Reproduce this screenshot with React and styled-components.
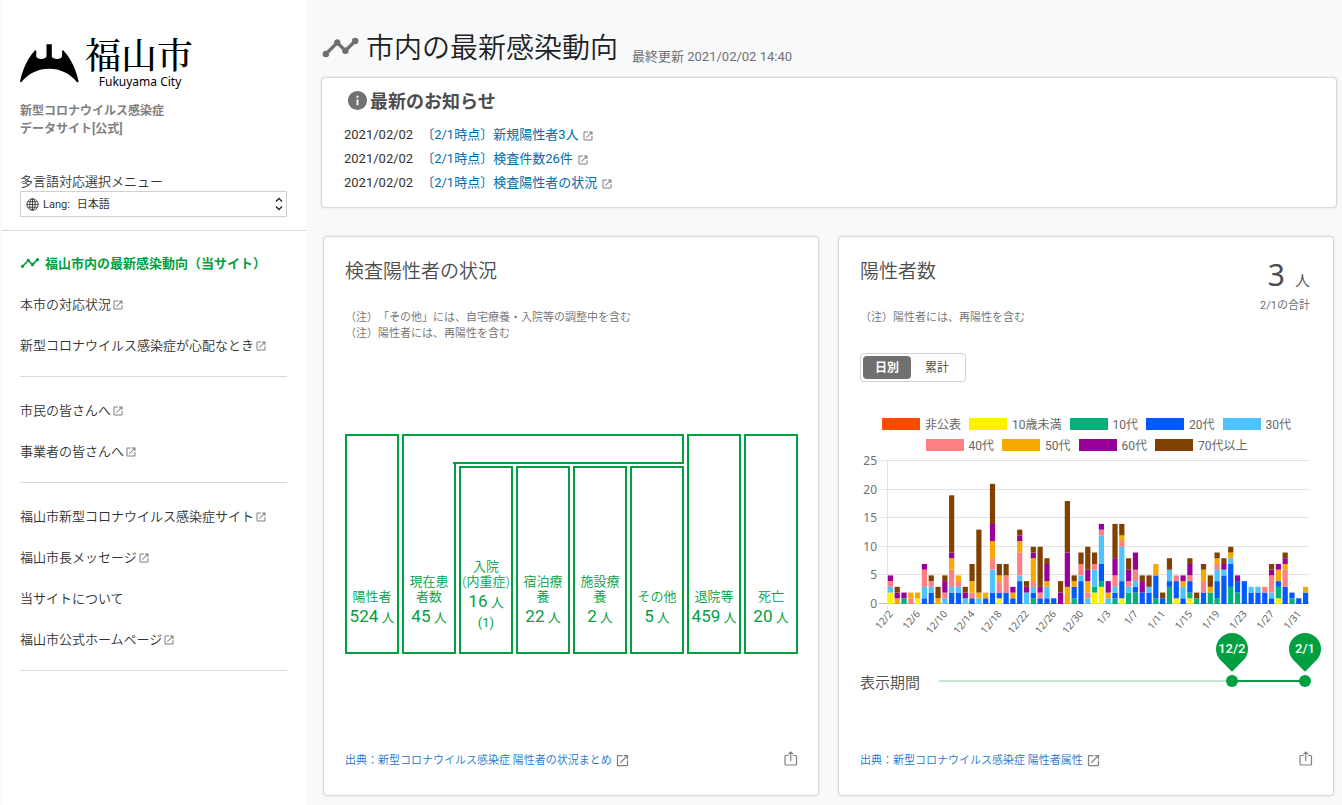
import { useState } from 'react';
import styled, { createGlobalStyle } from 'styled-components';

const GREEN = '#00a040';

const GlobalStyle = createGlobalStyle`
  * { box-sizing:border-box; }
  body {
    margin:0;
    background-color:#f7f9fb;
    color:#333;
    font-family:Roboto, "Noto Sans CJK JP", sans-serif;
    font-size:13px;
    font-weight:350;
    text-spacing-trim:space-all;
  }
  h1, h2, h3, p, ul { margin:0; padding:0; }
  ul { list-style:none; }
  a { color:inherit; text-decoration:none; }
  button, select { font:inherit; color:inherit; }
  svg { display:block; flex:none; }
`;

const Page = styled.div`
  display:flex;
  min-height:100vh;
  padding-left:2px;
`;

// サイドバー
const SideBar = styled.aside`
  flex:none;
  width:304px;
  background-color:#fff;
`;
const SideHeader = styled.header`
  padding:36px 19px 13px 18px;
  border-bottom:1px solid #d9d9d9;
`;
const Logo = styled.a`
  display:flex;
  gap:6px;
  color:#000;
`;
const Emblem = styled.svg`
  margin-top:8px;
`;
const LogoText = styled.span`
  display:flex;
  flex-direction:column;
`;
const LogoName = styled.span`
  font-family:"Noto Serif CJK JP", "Noto Sans CJK JP", serif;
  font-size:36px;
  font-weight:500;
  line-height:36px;
`;
const LogoSub = styled.span`
  padding-left:2px;
  font-family:"Noto Sans", sans-serif;
  font-size:12px;
  font-weight:400;
  line-height:20px;
  text-align:center;
`;
const SiteName = styled.h1`
  margin-top:10px;
  color:#808080;
  font-size:12px;
  font-weight:700;
  line-height:18px;
`;
const LangLabel = styled.label`
  display:block;
  margin-top:34px;
  line-height:19px;
`;
const LangBox = styled.div`
  display:flex;
  align-items:center;
  gap:4px;
  height:26px;
  padding:0 3px 0 5px;
  border:1px solid #d0d0d0;
  font-size:11px;
  font-weight:400;
`;
const LangSelect = styled.select`
  flex:1;
  padding:0 0 0 3px;
  border:0;
  background:none;
  appearance:none;
`;
const NavGroup = styled.ul`
  margin:0 19px 0 18px;
  padding:${({ $first }) => ($first ? '11px' : '12px')} 0 11px;
  border-bottom:1px solid #d9d9d9;
`;
const NavLink = styled.a`
  display:flex;
  align-items:center;
  gap:${({ $current }) => ($current ? '5px' : '1px')};
  height:41px;
  color:${({ $current }) => ($current ? GREEN : '#333')};
  font-size:13px;
  font-weight:${({ $current }) => ($current ? 700 : 350)};
`;

// メイン
const Main = styled.main`
  flex:1;
  min-width:0;
  padding:24px 5px 9px 15px;
`;
const PageHeader = styled.header`
  display:flex;
  align-items:center;
  gap:6px;
  height:46px;
  color:#707070;
`;
const PageTitle = styled.h2`
  padding-top:3px;
  color:#222;
  font-size:28px;
  font-weight:350;
  line-height:40px;
`;
const Updated = styled.p`
  align-self:flex-end;
  margin-left:8px;
  padding-bottom:5px;
  font-weight:400;
  line-height:16px;
`;
const Panel = styled.section`
  background-color:#fff;
  border:1px solid #d9d9d9;
  border-radius:4px;
  box-shadow:0 0 2px rgba(0,0,0,0.15);
`;
const News = styled(Panel)`
  margin-top:7px;
  padding:8px 22px 12px;
`;
const NewsTitle = styled.h3`
  display:flex;
  align-items:center;
  gap:1px;
  height:28px;
  margin-bottom:9px;
  padding-left:2px;
  color:#4d4d4d;
  font-size:18px;
  font-weight:700;
`;
const NewsItem = styled.li`
  display:flex;
  align-items:center;
  gap:8px;
  height:24px;
  font-weight:400;
  line-height:18px;
`;
const NewsLink = styled.a`
  display:flex;
  align-items:center;
  gap:4px;
  color:#006ca8;
`;
const Cards = styled.div`
  display:grid;
  grid-template-columns:repeat(2, minmax(0, 1fr));
  gap:19px;
  margin-top:28px;
  padding:0 3px 0 2px;
`;
const Card = styled(Panel)`
  display:flex;
  flex-direction:column;
  min-height:560px;
  padding:21px 20px 23px 21px;
`;
const CardHead = styled.div`
  display:flex;
  justify-content:space-between;
  height:52px;
`;
const CardTitle = styled.h3`
  color:#4d4d4d;
  font-size:19px;
  font-weight:350;
  line-height:28px;
`;
const Total = styled.div`
  padding-right:3px;
  color:#4d4d4d;
  font-size:15px;
  text-align:right;
`;
const TotalValue = styled.p`
  line-height:34px;
`;
const BigNumber = styled.strong`
  margin-right:10px;
  font-family:"Noto Sans", sans-serif;
  font-size:30px;
  font-weight:400;
`;
const SubText = styled.p`
  color:#707070;
  font-size:11px;
  font-weight:${({ $strong }) => ($strong ? 400 : 350)};
  line-height:16px;
`;
const Body = styled.div`
  flex:1;
  display:flex;
  flex-direction:column;
  justify-content:${({ $top }) => ($top ? 'flex-start' : 'center')};
  padding-top:${({ $top }) => ($top ? '31px' : '0')};
`;
const Footer = styled.footer`
  display:flex;
  align-items:center;
  justify-content:space-between;
  height:26px;
`;
const Source = styled.a`
  display:flex;
  align-items:center;
  gap:3px;
  color:#1976d2;
  font-size:11px;
`;
const ShareButton = styled.button`
  padding:0;
  border:0;
  background:none;
  color:#808080;
`;
const LinkMark = styled.svg`
  margin-top:2px;
`;

// 検査陽性者の状況
const Diagram = styled.div`
  display:grid;
  grid-template-columns:repeat(8, minmax(0, 1fr));
  grid-template-rows:30px 188px;
  gap:2px 3px;
  color:${GREEN};
`;
const Box = styled.div`
  grid-column:${({ $col }) => $col};
  grid-row:${({ $row }) => $row};
  display:flex;
  flex-direction:column;
  justify-content:flex-end;
  padding-bottom:22px;
  border:2px solid ${GREEN};
  line-height:15px;
  text-align:center;
`;
const OpenBox = styled(Box)`
  margin-top:-2px;
  border-top:0;
`;
const Roof = styled.div`
  grid-column:2 / 7;
  grid-row:1;
  border:2px solid ${GREEN};
  border-bottom:0;
`;
const RoofEdge = styled.div`
  grid-column:3 / 7;
  grid-row:1;
  align-self:end;
  margin-left:-6px;
  border-bottom:2px solid ${GREEN};
`;
const Count = styled.span`
  line-height:24px;
  white-space:nowrap;
`;
const Num = styled.b`
  font-size:17px;
  font-weight:400;
`;
const Note = styled.span`
  font-weight:400;
`;

// 陽性者数
const Toggle = styled.div`
  display:flex;
  align-self:flex-start;
  margin-top:27px;
  padding:2px;
  border:1px solid #d0d0d0;
  border-radius:4px;
`;
const ToggleButton = styled.button`
  width:${({ $active }) => ($active ? '48px' : '52px')};
  height:23px;
  padding:0;
  border:0;
  border-radius:4px;
  background-color:${({ $active }) => ($active ? '#707070' : 'transparent')};
  color:${({ $active }) => ($active ? '#fff' : '#4d4d4d')};
  font-size:12px;
  font-weight:${({ $active }) => ($active ? 700 : 400)};
  line-height:22px;
`;
const Legend = styled.div`
  display:flex;
  flex-wrap:wrap;
  justify-content:center;
  column-gap:8px;
`;
const LegendItem = styled.button`
  display:flex;
  align-items:center;
  gap:5px;
  height:21px;
  padding:0;
  border:0;
  background:none;
  color:#666;
  font-size:12px;
  font-weight:400;
`;
const Swatch = styled.span`
  width:38px;
  height:12px;
  background-color:${({ $color }) => $color};
`;
const Chart = styled.svg`
  width:100%;
  overflow:visible;
  font-family:"Noto Sans", sans-serif;
  font-weight:400;
`;
const Period = styled.div`
  display:flex;
  align-items:center;
  gap:13px;
  height:24px;
  margin-top:32px;
  padding-right:2px;
  color:#4d4d4d;
  font-size:15px;
`;
const Slider = styled.div`
  position:relative;
  flex:1;
  height:12px;
`;
const Track = styled.div`
  position:absolute;
  inset:5px 6px;
  background-color:#c5e7d1;
`;
const Fill = styled.div`
  position:absolute;
  top:0;
  bottom:0;
  right:0;
  background-color:${GREEN};
`;
const Pin = styled.output`
  position:absolute;
  bottom:10px;
  z-index:1;
  width:32px;
  height:32px;
  margin:0 0 7px -16px;
  color:#fff;
  font-size:13px;
  font-weight:500;
  line-height:32px;
  text-align:center;
  &::before {
    content:'';
    position:absolute;
    inset:0;
    z-index:-1;
    border-radius:50% 50% 0 50%;
    background-color:${GREEN};
    transform:rotate(45deg);
  }
`;
const Range = styled.input`
  position:absolute;
  left:0;
  top:0;
  width:100%;
  height:12px;
  margin:0;
  background:none;
  appearance:none;
  pointer-events:none;
  &::-webkit-slider-thumb {
    appearance:none;
    width:12px;
    height:12px;
    border-radius:50%;
    background-color:${GREEN};
    pointer-events:auto;
  }
`;

const SERIES = [
  ['非公表', '#ff4b00'],
  ['10歳未満', '#fff100'],
  ['10代', '#03af7a'],
  ['20代', '#005aff'],
  ['30代', '#4dc4ff'],
  ['40代', '#ff8082'],
  ['50代', '#f6aa00'],
  ['60代', '#990099'],
  ['70代以上', '#804000'],
];

// 12/2 からの日別件数 (10歳未満, 10代, 20代, 30代, 40代, 50代, 60代, 70代以上)
const DAYS = [
  [2, 0, 0, 1, 1, 0, 1, 0], [0, 0, 0, 0, 0, 1, 1, 1], [0, 1, 0, 0, 0, 0, 1, 0],
  [0, 0, 0, 0, 1, 1, 0, 0], [1, 0, 0, 0, 0, 1, 0, 0], [0, 0, 1, 2, 3, 0, 1, 0],
  [0, 0, 2, 1, 1, 0, 0, 1], [0, 0, 0, 0, 0, 1, 0, 2], [0, 0, 0, 1, 1, 0, 2, 1],
  [0, 0, 2, 1, 3, 2, 1, 10], [0, 0, 2, 1, 1, 1, 0, 0], [0, 0, 0, 1, 0, 0, 1, 1],
  [0, 0, 1, 0, 1, 2, 0, 3], [0, 0, 0, 1, 0, 1, 0, 11], [0, 0, 1, 0, 0, 1, 0, 0],
  [0, 0, 2, 4, 2, 3, 3, 7], [1, 0, 1, 0, 2, 1, 0, 2], [0, 0, 2, 0, 3, 0, 0, 2],
  [0, 0, 1, 0, 0, 1, 1, 0], [0, 0, 4, 1, 4, 2, 1, 1], [0, 0, 0, 2, 0, 0, 1, 1],
  [0, 1, 1, 1, 1, 4, 1, 1], [0, 0, 1, 0, 1, 0, 1, 7], [0, 0, 1, 2, 0, 1, 3, 1],
  [0, 0, 1, 0, 0, 0, 0, 0], [0, 0, 0, 0, 0, 0, 2, 2], [0, 0, 0, 0, 0, 3, 6, 9],
  [0, 1, 2, 0, 0, 1, 0, 1], [0, 0, 4, 1, 2, 0, 0, 2], [0, 0, 0, 1, 1, 2, 2, 4],
  [2, 1, 0, 3, 1, 0, 0, 2], [3, 1, 3, 5, 1, 0, 1, 0], [0, 0, 0, 1, 0, 1, 2, 0],
  [0, 1, 1, 1, 2, 0, 3, 6], [1, 0, 3, 6, 1, 1, 0, 2], [0, 2, 0, 1, 1, 0, 2, 2],
  [0, 2, 1, 1, 2, 0, 3, 0], [0, 0, 2, 0, 0, 0, 2, 1], [0, 0, 2, 1, 0, 0, 0, 2],
  [0, 1, 4, 0, 0, 2, 0, 0], [0, 0, 1, 0, 0, 0, 0, 1], [0, 3, 1, 2, 0, 0, 0, 2],
  [1, 0, 3, 0, 1, 0, 0, 0], [0, 0, 1, 2, 0, 1, 1, 0], [1, 1, 2, 0, 1, 0, 2, 1],
  [0, 1, 0, 0, 0, 0, 0, 1], [0, 0, 2, 0, 2, 2, 0, 1], [0, 2, 0, 0, 0, 1, 0, 2],
  [0, 1, 3, 2, 1, 1, 0, 1], [0, 0, 5, 1, 0, 0, 1, 1], [0, 3, 4, 1, 0, 1, 0, 1],
  [0, 2, 2, 0, 0, 0, 1, 0], [0, 0, 4, 0, 0, 0, 0, 0], [0, 0, 2, 1, 0, 0, 0, 0],
  [0, 0, 2, 1, 0, 0, 0, 0], [0, 0, 2, 0, 1, 0, 0, 0], [0, 0, 1, 1, 3, 0, 1, 1],
  [1, 2, 1, 0, 0, 2, 1, 0], [0, 0, 3, 0, 3, 1, 1, 1], [0, 1, 1, 0, 0, 0, 0, 0],
  [0, 0, 1, 0, 0, 0, 0, 0], [0, 0, 2, 0, 0, 1, 0, 0],
];

const NAV = [
  [
    { text: '福山市内の最新感染動向（当サイト）', current: true },
    { text: '本市の対応状況', external: true },
    { text: '新型コロナウイルス感染症が心配なとき', external: true },
  ],
  [
    { text: '市民の皆さんへ', external: true },
    { text: '事業者の皆さんへ', external: true },
  ],
  [
    { text: '福山市新型コロナウイルス感染症サイト', external: true },
    { text: '福山市長メッセージ', external: true },
    { text: '当サイトについて' },
    { text: '福山市公式ホームページ', external: true },
  ],
];

const NEWS = ['〔2/1時点〕新規陽性者3人', '〔2/1時点〕検査件数26件', '〔2/1時点〕検査陽性者の状況'];

const MAX_DAY = 305;

function dayLabel(index) {
  const date = new Date(2020, 11, 2 + index);
  return `${date.getMonth() + 1}/${date.getDate()}`;
}

function TrendIcon({ size }) {
  return (
    <svg width={size} height={size} viewBox="0 0 24 24" fill="currentColor" aria-hidden="true">
      <path d="M3,14L3.5,14.07L8.07,9.5C7.89,8.85 8.06,8.11 8.59,7.59C9.37,6.8 10.63,6.8 11.41,7.59C11.94,8.11 12.11,8.85 11.93,9.5L14.5,12.07L15,12C15.18,12 15.35,12 15.5,12.07L19.07,8.5C19,8.35 19,8.18 19,8A2,2 0 0,1 21,6A2,2 0 0,1 23,8A2,2 0 0,1 21,10C20.82,10 20.65,10 20.5,9.93L16.93,13.5C17,13.65 17,13.82 17,14A2,2 0 0,1 15,16A2,2 0 0,1 13,14L13.07,13.5L10.5,10.93C10.18,11 9.82,11 9.5,10.93L4.93,15.5L5,16A2,2 0 0,1 3,18A2,2 0 0,1 1,16A2,2 0 0,1 3,14Z" />
    </svg>
  );
}

function ExternalIcon({ size = 12 }) {
  return (
    <LinkMark width={size} height={size} viewBox="0 0 24 24" fill="#808080" aria-hidden="true">
      <path d="M14,3V5H17.59L7.76,14.83L9.17,16.24L19,6.41V10H21V3M19,19H5V5H12V3H5C3.89,3 3,3.9 3,5V19A2,2 0 0,0 5,21H19A2,2 0 0,0 21,19V12H19V19Z" />
    </LinkMark>
  );
}

function InfoIcon() {
  return (
    <svg width="23" height="23" viewBox="0 0 24 24" fill="#707070" aria-hidden="true">
      <path d="M13,9H11V7H13M13,17H11V11H13M12,2A10,10 0 0,0 2,12A10,10 0 0,0 12,22A10,10 0 0,0 22,12A10,10 0 0,0 12,2Z" />
    </svg>
  );
}

function GlobeIcon() {
  return (
    <svg width="13" height="13" viewBox="0 0 24 24" fill="none" stroke="#333" strokeWidth="1.6" aria-hidden="true">
      <circle cx="12" cy="12" r="10.5" />
      <ellipse cx="12" cy="12" rx="5" ry="10.5" />
      <path d="M12 1.5V22.5M1.5 12H22.5M3 7H21M3 17H21" />
    </svg>
  );
}

function ShareIcon() {
  return (
    <svg width="15" height="16" viewBox="0 0 15 16" fill="none" stroke="currentColor" strokeWidth="1.2" aria-hidden="true">
      <path d="M5.5 4.5H3Q2 4.5 2 5.5V13Q2 14 3 14H12.5Q13.5 14 13.5 13V5.5Q13.5 4.5 12.5 4.5H10" />
      <path d="M7.75 10V1.5M5.5 3.25L7.75 1L10 3.25" />
    </svg>
  );
}

function CardFooter({ children }) {
  return (
    <Footer>
      <Source href="#source">{children}<ExternalIcon size={15} /></Source>
      <ShareButton type="button" aria-label="共有"><ShareIcon /></ShareButton>
    </Footer>
  );
}

function StatusItem({ as: Wrap = Box, col, row, label, count, note }) {
  return (
    <Wrap $col={col} $row={row}>
      <span>{label}</span>
      <Count><Num>{count}</Num> 人</Count>
      {note && <Note>{note}</Note>}
    </Wrap>
  );
}

function StackedChart({ hidden }) {
  const left = 27;
  const step = 422 / DAYS.length;
  const bottom = 149;
  const unit = 143 / 25;
  return (
    <Chart viewBox="0 0 453 182" role="img" aria-label="陽性者数の推移">
      {[0, 5, 10, 15, 20, 25].map((v) => (
        <g key={v}>
          <path d={`M19 ${Math.round(bottom - v * unit) - 0.5}H449`} stroke={v ? '#e3e3e3' : '#bbb'} />
          <text x="17" y={bottom - v * unit + 4} fontSize="12" textAnchor="end" fill="#707070">{v}</text>
        </g>
      ))}
      <path d={`M${left}.5 6V${bottom + 5}`} stroke="#e3e3e3" />
      {DAYS.map((day, i) => {
        let sum = 0;
        return (
          <g key={i}>
            {day.map((n, k) => {
              if (!n || hidden.includes(k + 1)) return null;
              sum += n;
              return (
                <rect key={k} x={left + i * step + 0.8} y={bottom - sum * unit} width="5.2" height={n * unit} fill={SERIES[k + 1][1]} />
              );
            })}
            {i % 4 === 0 && (
              <text
                transform={`translate(${left + (i + 0.5) * step + 3} 159) rotate(-50)`}
                fontSize="10"
                textAnchor="end"
                fill="#666"
              >
                {dayLabel(i)}
              </text>
            )}
          </g>
        );
      })}
    </Chart>
  );
}

function App() {
  const [mode, setMode] = useState('日別');
  const [hidden, setHidden] = useState([]);
  const [from, setFrom] = useState(244);
  const [to, setTo] = useState(MAX_DAY);

  const toggleSeries = (index) => {
    setHidden(hidden.includes(index) ? hidden.filter((v) => v !== index) : [...hidden, index]);
  };

  const rate = (value) => `${(value / MAX_DAY) * 100}%`;

  return (
    <>
      <GlobalStyle />
      <Page>
        <SideBar>
          <SideHeader>
            <Logo href="#top">
              <Emblem width="59" height="39" viewBox="0 0 178 116" aria-hidden="true">
                <path d="M80 0H96V36C97 46 125 48 127 36V20C128 17 132 18 133 21C156 46 170 80 177 112L173 115C150 88 122 74 88 74C54 74 26 88 3 115L0 112C7 80 20 46 43 21C45 18 49 17 49 20V36C51 48 79 46 80 36Z" />
              </Emblem>
              <LogoText>
                <LogoName>福山市</LogoName>
                <LogoSub>Fukuyama City</LogoSub>
              </LogoText>
            </Logo>
            <SiteName>新型コロナウイルス感染症<br />データサイト[公式]</SiteName>
            <LangLabel htmlFor="lang">多言語対応選択メニュー</LangLabel>
            <LangBox>
              <GlobeIcon />
              <span>Lang:</span>
              <LangSelect id="lang"><option>日本語</option></LangSelect>
              <svg width="8" height="14" viewBox="0 0 8 14" fill="none" stroke="#222" strokeWidth="1.3" aria-hidden="true">
                <path d="M1 4.5L4 1.5L7 4.5M1 9.5L4 12.5L7 9.5" />
              </svg>
            </LangBox>
          </SideHeader>
          <nav>
            {NAV.map((group, i) => (
              <NavGroup key={i} $first={i === 0}>
                {group.map((item) => (
                  <li key={item.text}>
                    <NavLink href="#nav" $current={item.current}>
                      {item.current && <TrendIcon size={20} />}
                      {item.text}
                      {item.external && <ExternalIcon />}
                    </NavLink>
                  </li>
                ))}
              </NavGroup>
            ))}
          </nav>
        </SideBar>

        <Main>
          <PageHeader>
            <TrendIcon size={39} />
            <PageTitle>市内の最新感染動向</PageTitle>
            <Updated>最終更新 2021/02/02 14:40</Updated>
          </PageHeader>
          <News>
            <NewsTitle><InfoIcon />最新のお知らせ</NewsTitle>
            <ul>
              {NEWS.map((text) => (
                <NewsItem key={text}>
                  <time>2021/02/02</time>
                  <NewsLink href="#news">{text}<ExternalIcon /></NewsLink>
                </NewsItem>
              ))}
            </ul>
          </News>

          <Cards>
            <Card>
              <CardHead>
                <CardTitle>検査陽性者の状況</CardTitle>
              </CardHead>
              <SubText>（注）「その他」には、自宅療養・入院等の調整中を含む</SubText>
              <SubText>（注）陽性者には、再陽性を含む</SubText>
              <Body>
                <Diagram>
                  <StatusItem col="1" row="1 / 3" label="陽性者" count={524} />
                  <Roof />
                  <RoofEdge />
                  <StatusItem as={OpenBox} col="2" row="2" label="現在患者数" count={45} />
                  <StatusItem col="3" row="2" label={<>入院<br />(内重症)</>} count={16} note="(1)" />
                  <StatusItem col="4" row="2" label="宿泊療養" count={22} />
                  <StatusItem col="5" row="2" label="施設療養" count={2} />
                  <StatusItem col="6" row="2" label="その他" count={5} />
                  <StatusItem col="7" row="1 / 3" label="退院等" count={459} />
                  <StatusItem col="8" row="1 / 3" label="死亡" count={20} />
                </Diagram>
              </Body>
              <CardFooter>出典：新型コロナウイルス感染症 陽性者の状況まとめ</CardFooter>
            </Card>

            <Card>
              <CardHead>
                <CardTitle>陽性者数</CardTitle>
                <Total>
                  <TotalValue><BigNumber>3</BigNumber>人</TotalValue>
                  <SubText $strong>2/1の合計</SubText>
                </Total>
              </CardHead>
              <SubText>（注）陽性者には、再陽性を含む</SubText>
              <Toggle>
                {['日別', '累計'].map((name) => (
                  <ToggleButton key={name} type="button" $active={mode === name} onClick={() => setMode(name)}>
                    {name}
                  </ToggleButton>
                ))}
              </Toggle>
              <Body $top>
                <Legend>
                  {SERIES.map(([name, color], i) => (
                    <LegendItem key={name} type="button" onClick={() => toggleSeries(i)}>
                      <Swatch $color={color} />
                      {name}
                    </LegendItem>
                  ))}
                </Legend>
                <StackedChart hidden={hidden} />
                <Period>
                  <span>表示期間</span>
                  <Slider>
                    <Track>
                      <Fill style={{ left: rate(from), right: `${100 - (to / MAX_DAY) * 100}%` }} />
                      <Pin style={{ left: rate(from) }}>{dayLabel(from - 244)}</Pin>
                      <Pin style={{ left: rate(to) }}>{dayLabel(to - 244)}</Pin>
                    </Track>
                    <Range type="range" aria-label="開始日" min="0" max={MAX_DAY} value={from} onChange={(e) => setFrom(Math.min(+e.target.value, to))} />
                    <Range type="range" aria-label="終了日" min="0" max={MAX_DAY} value={to} onChange={(e) => setTo(Math.max(+e.target.value, from))} />
                  </Slider>
                </Period>
              </Body>
              <CardFooter>出典：新型コロナウイルス感染症 陽性者属性</CardFooter>
            </Card>
          </Cards>
        </Main>
      </Page>
    </>
  );
}

export default App;
